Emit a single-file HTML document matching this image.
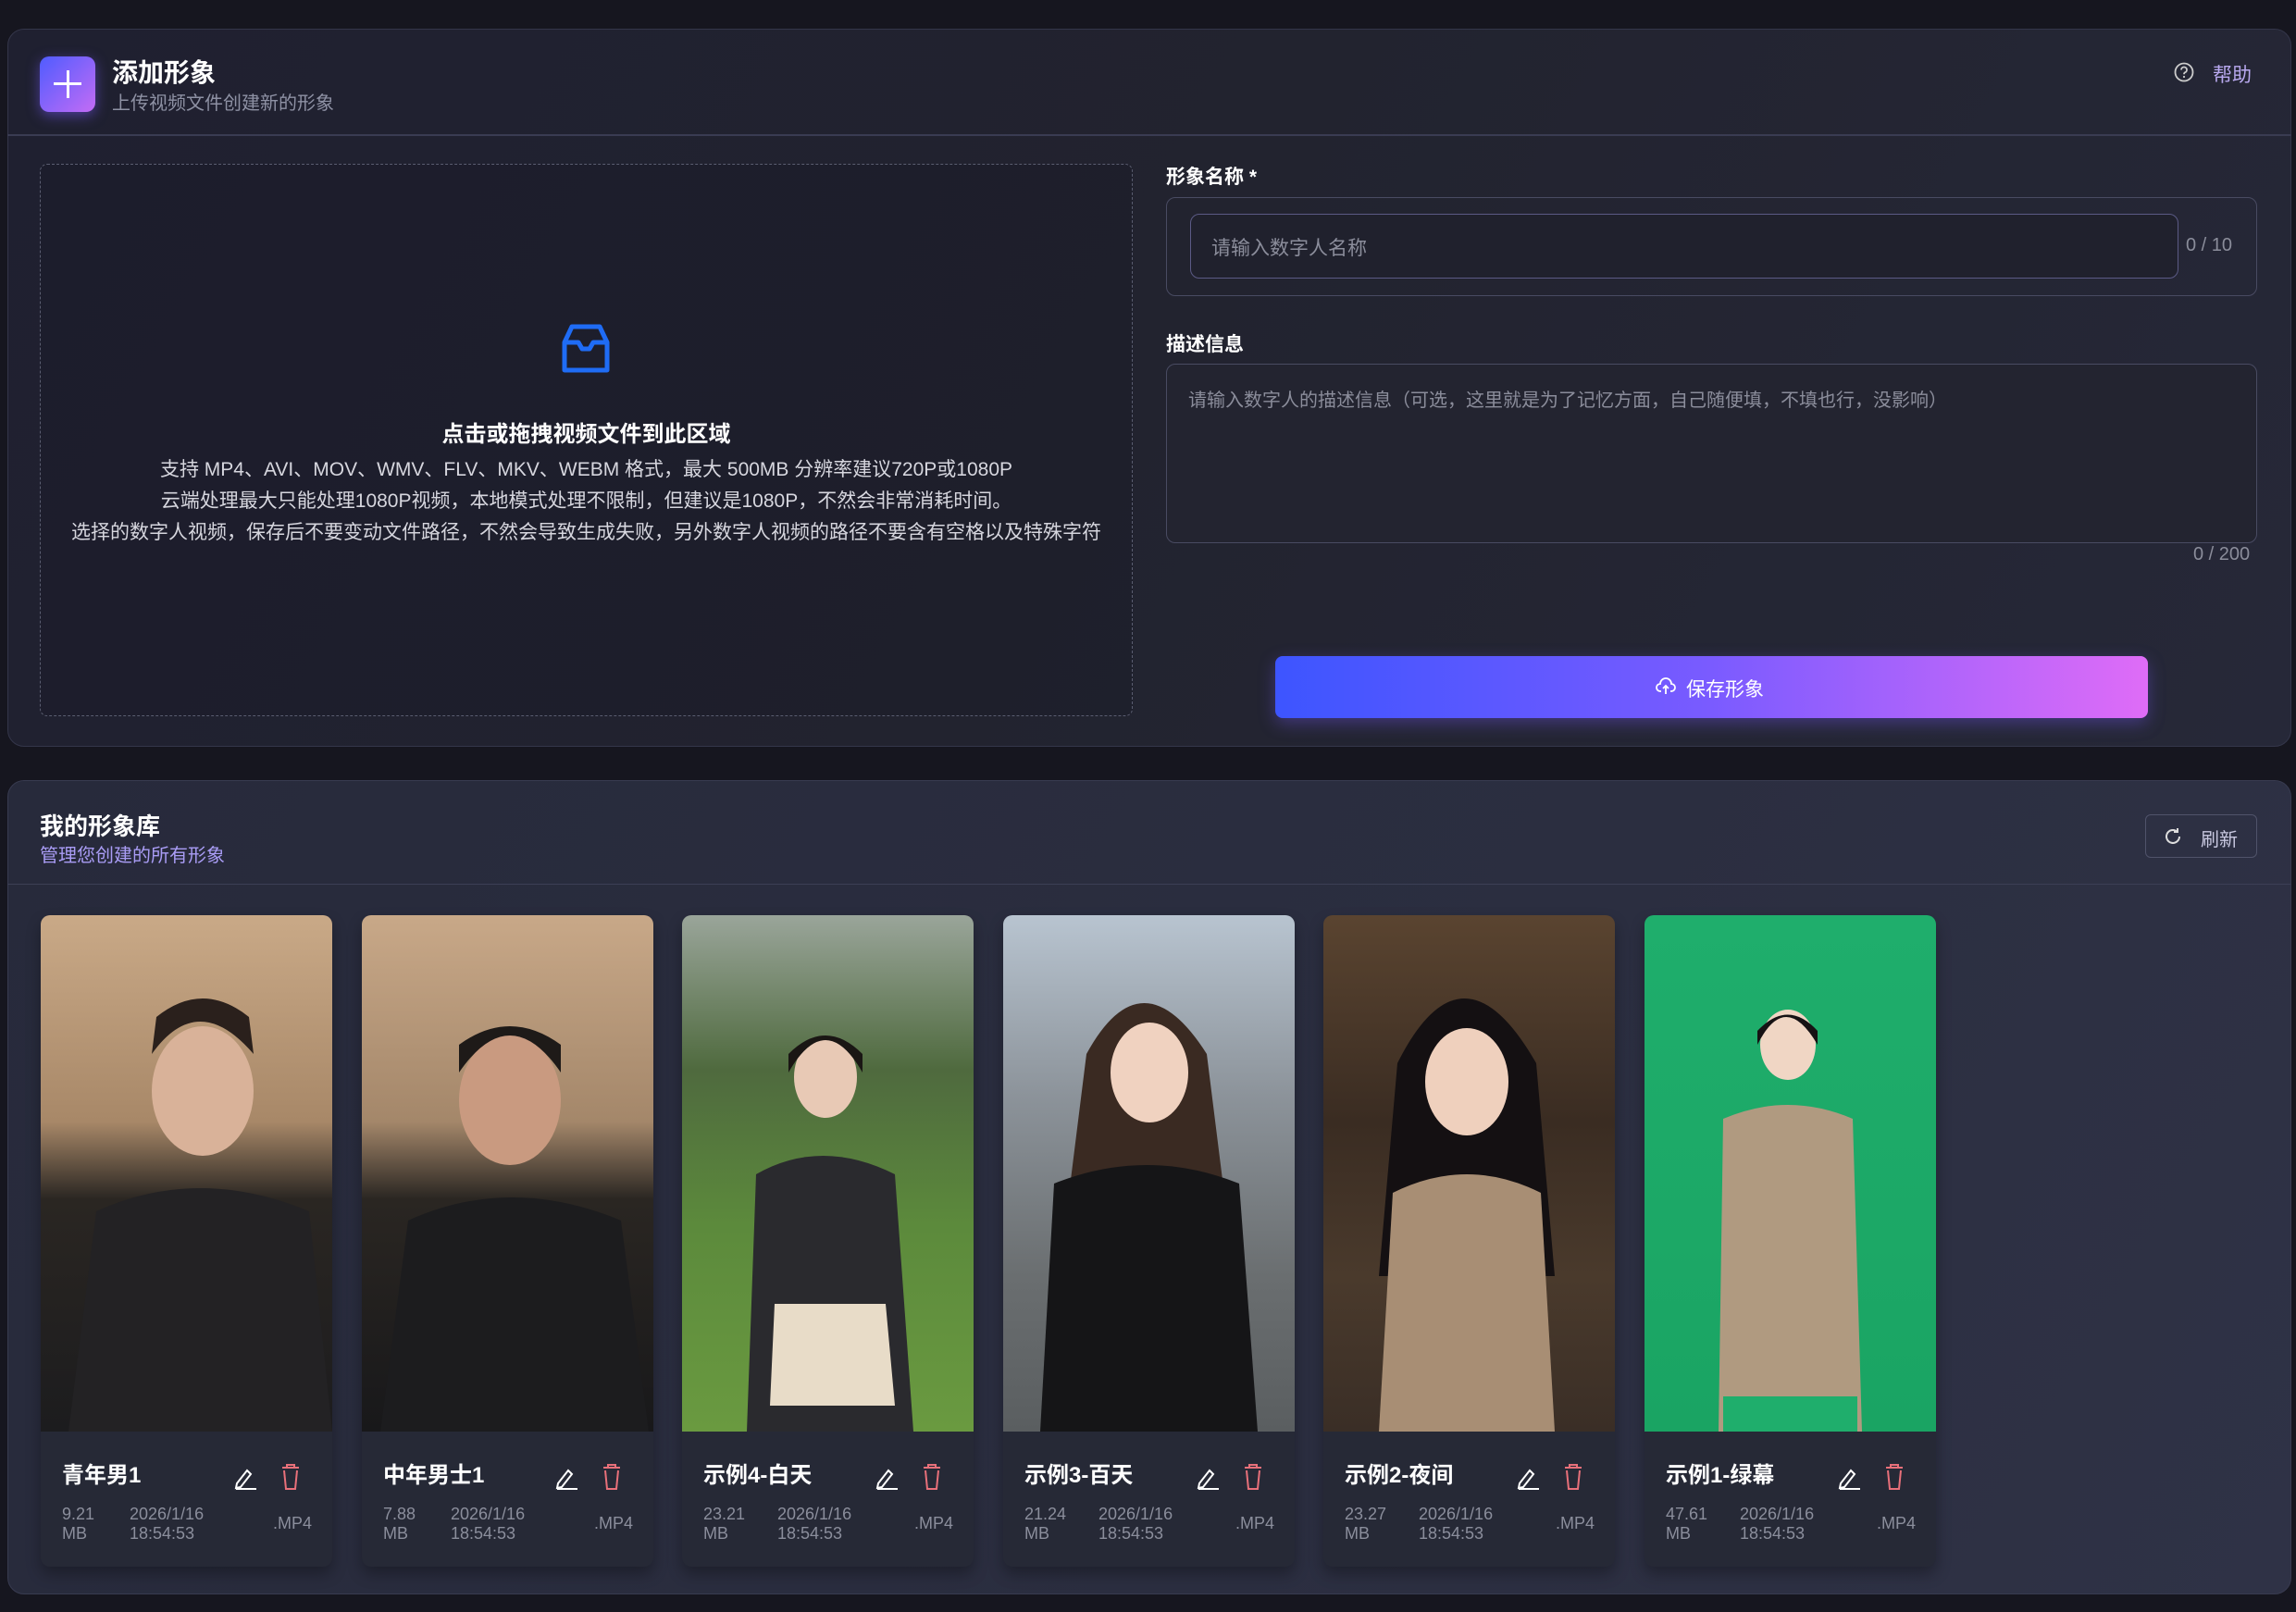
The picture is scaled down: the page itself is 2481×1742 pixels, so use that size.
<!DOCTYPE html>
<html><head><meta charset="utf-8"><style>
*{box-sizing:border-box;margin:0;padding:0}
body{width:2481px;height:1742px;background:#16161f;font-family:"Liberation Sans","Noto Sans CJK SC",sans-serif;color:#e8e8ee;position:relative;overflow:hidden}
.abs{position:absolute}
.p1{left:8px;top:31px;width:2468px;height:776px;border-radius:18px;background:linear-gradient(120deg,#1f2030,#22232f 50%,#262838);border:1px solid #34364a}
.p2{left:8px;top:843px;width:2468px;height:880px;border-radius:18px;background:linear-gradient(120deg,#272a3b,#2b2e40 60%,#2f3246);border:1px solid #383b50}
.card{top:989px;width:315px;height:704px;border-radius:10px;background:#262936;overflow:hidden;box-shadow:0 8px 16px rgba(0,0,0,.3)}
.img{position:absolute;left:0;top:0;width:315px;height:558px}
.nm{position:absolute;left:23px;top:585px;font-size:24px;font-weight:bold;color:#fff}
.meta{position:absolute;top:637px;font-size:18px;line-height:21px;color:#8b8e9c}
</style></head><body>
<div class="abs p1"></div>
<div class="abs" style="left:8px;top:145px;width:2468px;height:2px;background:#3a3c52"></div>
<div class="abs" style="left:43px;top:61px;width:60px;height:60px;border-radius:10px;background:linear-gradient(135deg,#4f5cff,#c36cf5);box-shadow:0 4px 14px rgba(120,90,255,.5)"></div>
<div class="abs" style="left:58px;top:89px;width:30px;height:3px;background:#fff"></div>
<div class="abs" style="left:72px;top:76px;width:3px;height:30px;background:#fff"></div>
<div class="abs" style="left:121px;top:57px;font-size:28px;font-weight:bold;color:#fff">添加形象</div>
<div class="abs" style="left:121px;top:95px;font-size:20px;color:#8e91a4">上传视频文件创建新的形象</div>
<svg class="abs" style="left:2349px;top:67px" width="22" height="22" viewBox="0 0 22 22"><circle cx="11" cy="11" r="9.5" fill="none" stroke="#ccc" stroke-width="1.8"/><path d="M8 8.5a3 3 0 1 1 4 2.8c-.8.4-1 1-1 2" fill="none" stroke="#ccc" stroke-width="1.8"/><circle cx="11" cy="16" r="1.1" fill="#ccc"/></svg>
<div class="abs" style="left:2391px;top:65px;font-size:21px;color:#b9a9f0">帮助</div>

<div class="abs" style="left:43px;top:177px;width:1181px;height:597px;border:1.5px dashed #5a5d70;border-radius:8px;background:rgba(20,20,30,.25)"></div>
<svg class="abs" style="left:605px;top:350px" width="56" height="54" viewBox="0 0 56 54"><path d="M5 20 L13 3 H43 L51 20 V50 H5 Z M5 20 H20 L24 27 H32 L36 20 H51" fill="none" stroke="#1f6cf5" stroke-width="5" stroke-linejoin="round"/></svg>
<div class="abs" style="left:43px;width:1181px;top:449px;text-align:center;font-size:24px;font-weight:bold;color:#fff">点击或拖拽视频文件到此区域</div>
<div class="abs" style="left:43px;width:1181px;top:491px;text-align:center;font-size:21px;line-height:34px;color:#d6d6de">支持 MP4、AVI、MOV、WMV、FLV、MKV、WEBM 格式，最大 500MB 分辨率建议720P或1080P<br>云端处理最大只能处理1080P视频，本地模式处理不限制，但建议是1080P，不然会非常消耗时间。<br>选择的数字人视频，保存后不要变动文件路径，不然会导致生成失败，另外数字人视频的路径不要含有空格以及特殊字符</div>

<div class="abs" style="left:1260px;top:175px;font-size:21px;font-weight:bold;color:#fff">形象名称 *</div>
<div class="abs" style="left:1260px;top:213px;width:1179px;height:107px;border:1px solid #494b62;border-radius:10px"></div>
<div class="abs" style="left:1286px;top:231px;width:1068px;height:70px;border:1px solid #5b5a85;border-radius:10px;background:#20212d"></div>
<div class="abs" style="left:1309px;top:252px;font-size:21px;color:#8b8d9b">请输入数字人名称</div>
<div class="abs" style="left:2362px;top:254px;font-size:20px;color:#8b8d9b">0 / 10</div>
<div class="abs" style="left:1260px;top:356px;font-size:21px;font-weight:bold;color:#fff">描述信息</div>
<div class="abs" style="left:1260px;top:393px;width:1179px;height:194px;border:1px solid #494b62;border-radius:10px;background:#232430"></div>
<div class="abs" style="left:1284px;top:416px;font-size:20px;color:#8b8d9b">请输入数字人的描述信息（可选，这里就是为了记忆方面，自己随便填，不填也行，没影响）</div>
<div class="abs" style="left:2370px;top:588px;font-size:20px;color:#8b8d9b">0 / 200</div>
<div class="abs" style="left:1378px;top:709px;width:943px;height:67px;border-radius:8px;background:linear-gradient(90deg,#3d55ff,#7a5bff 50%,#df6cf7);box-shadow:0 6px 18px rgba(120,90,255,.35)"></div>
<svg class="abs" style="left:1789px;top:732px" width="22" height="20" viewBox="0 0 22 20"><path d="M6 15H5a4 4 0 0 1 0-8 6 6 0 0 1 12 0 4 4 0 0 1 0 8h-1M11 18V9M8 12l3-3 3 3" fill="none" stroke="#fff" stroke-width="1.8"/></svg>
<div class="abs" style="left:1822px;top:729px;font-size:21px;color:#fff">保存形象</div>

<div class="abs p2"></div>
<div class="abs" style="left:8px;top:955px;width:2468px;height:1px;background:#3c3f55"></div>
<div class="abs" style="left:43px;top:873px;font-size:26px;font-weight:bold;color:#fff">我的形象库</div>
<div class="abs" style="left:43px;top:908px;font-size:20px;color:#a99cf5">管理您创建的所有形象</div>
<div class="abs" style="left:2318px;top:880px;width:121px;height:47px;border:1px solid #50536a;border-radius:6px"></div>
<svg class="abs" style="left:2337px;top:893px" width="22" height="22" viewBox="0 0 22 22"><path d="M18 11a7 7 0 1 1-2.5-5.4M16 2v4h-4" fill="none" stroke="#ddd" stroke-width="2"/></svg>
<div class="abs" style="left:2378px;top:891px;font-size:20px;color:#c8c8e0">刷新</div>

<div class="abs card" style="left:44px"><div class="img" style="background:linear-gradient(180deg,#c9a987 0%,#a88868 40%,#2a2622 55%,#1c1c1e 100%)"></div>
<svg class="img" viewBox="0 0 315 558"><ellipse cx="175" cy="190" rx="55" ry="70" fill="#d9b299"/><path d="M120 150q50-70 110 0l-5-40q-50-40-100 0z" fill="#2a201c"/><path d="M30 558L60 320q110-50 230 0l25 238z" fill="#232224"/></svg>
<div class="nm">青年男1</div><div class="meta" style="left:23px">9.21<br>MB</div><div class="meta" style="left:96px">2026/1/16<br>18:54:53</div><div class="meta" style="left:251px;top:647px">.MP4</div></div>
<div class="abs card" style="left:391px"><div class="img" style="background:linear-gradient(180deg,#c8a888 0%,#a4876a 40%,#2a2622 55%,#18181a 100%)"></div>
<svg class="img" viewBox="0 0 315 558"><ellipse cx="160" cy="200" rx="55" ry="70" fill="#c99a80"/><path d="M105 170q55-80 110 0v-30q-55-40-110 0z" fill="#1e1a18"/><path d="M20 558L50 330q110-50 230 0l30 228z" fill="#1c1c1e"/></svg>
<div class="nm">中年男士1</div><div class="meta" style="left:23px">7.88<br>MB</div><div class="meta" style="left:96px">2026/1/16<br>18:54:53</div><div class="meta" style="left:251px;top:647px">.MP4</div></div>
<div class="abs card" style="left:737px"><div class="img" style="background:linear-gradient(180deg,#9aa59a 0%,#4f6a3e 30%,#5c8a3c 60%,#6a9a40 100%)"></div>
<svg class="img" viewBox="0 0 315 558"><ellipse cx="155" cy="175" rx="34" ry="44" fill="#e8c9b5"/><path d="M115 170q40-70 80 0v-20q-40-40-80 0z" fill="#1a1614"/><path d="M70 558L80 280q70-40 150 0l20 278z" fill="#2a2a2e"/><path d="M100 420h120l10 110H95z" fill="#e8dcc8"/></svg>
<div class="nm">示例4-白天</div><div class="meta" style="left:23px">23.21<br>MB</div><div class="meta" style="left:103px">2026/1/16<br>18:54:53</div><div class="meta" style="left:251px;top:647px">.MP4</div></div>
<div class="abs card" style="left:1084px"><div class="img" style="background:linear-gradient(180deg,#b8c4d0 0%,#8c939a 35%,#6a6e70 70%,#5a5e60 100%)"></div>
<svg class="img" viewBox="0 0 315 558"><path d="M90 150q60-110 130 0l20 160H70z" fill="#3a2a22"/><ellipse cx="158" cy="170" rx="42" ry="54" fill="#f0d2c0"/><path d="M40 558L55 290q100-40 200 0l20 268z" fill="#151517"/></svg>
<div class="nm">示例3-百天</div><div class="meta" style="left:23px">21.24<br>MB</div><div class="meta" style="left:103px">2026/1/16<br>18:54:53</div><div class="meta" style="left:251px;top:647px">.MP4</div></div>
<div class="abs card" style="left:1430px"><div class="img" style="background:linear-gradient(180deg,#5a4430 0%,#3a2c22 40%,#4a3a2c 70%,#3a2e26 100%)"></div>
<svg class="img" viewBox="0 0 315 558"><path d="M80 160q70-140 150 0l20 230H60z" fill="#141012"/><ellipse cx="155" cy="180" rx="45" ry="58" fill="#efd0bd"/><path d="M60 558L75 300q80-40 160 0l15 258z" fill="#a88e74"/></svg>
<div class="nm">示例2-夜间</div><div class="meta" style="left:23px">23.27<br>MB</div><div class="meta" style="left:103px">2026/1/16<br>18:54:53</div><div class="meta" style="left:251px;top:647px">.MP4</div></div>
<div class="abs card" style="left:1777px"><div class="img" style="background:linear-gradient(180deg,#1fae6c,#1aa463)"></div>
<svg class="img" viewBox="0 0 315 558"><ellipse cx="155" cy="140" rx="30" ry="38" fill="#f0d6c4"/><path d="M122 140q30-60 65 0v-15q-32-35-65 0z" fill="#161214"/><path d="M80 558L85 220q70-30 140 0l10 338z" fill="#b09a80"/><rect x="85" y="520" width="145" height="38" fill="#1fae6c"/></svg>
<div class="nm">示例1-绿幕</div><div class="meta" style="left:23px">47.61<br>MB</div><div class="meta" style="left:103px">2026/1/16<br>18:54:53</div><div class="meta" style="left:251px;top:647px">.MP4</div></div>
<svg class="abs" style="left:0;top:0" width="2481" height="1742">
<g fill="none" stroke-width="2">
<g id="ic"><path d="M256 1603l11-14 4 4-11 14-5 1z M255 1609h22" stroke="#fff"/><path d="M305 1586h18M310 1586v-3h8v3M307 1589l2 20h10l2-20" stroke="#e8707a"/></g>
<use href="#ic" x="347"/><use href="#ic" x="693"/><use href="#ic" x="1040"/><use href="#ic" x="1386"/><use href="#ic" x="1733"/>
</g></svg>
</body></html>
